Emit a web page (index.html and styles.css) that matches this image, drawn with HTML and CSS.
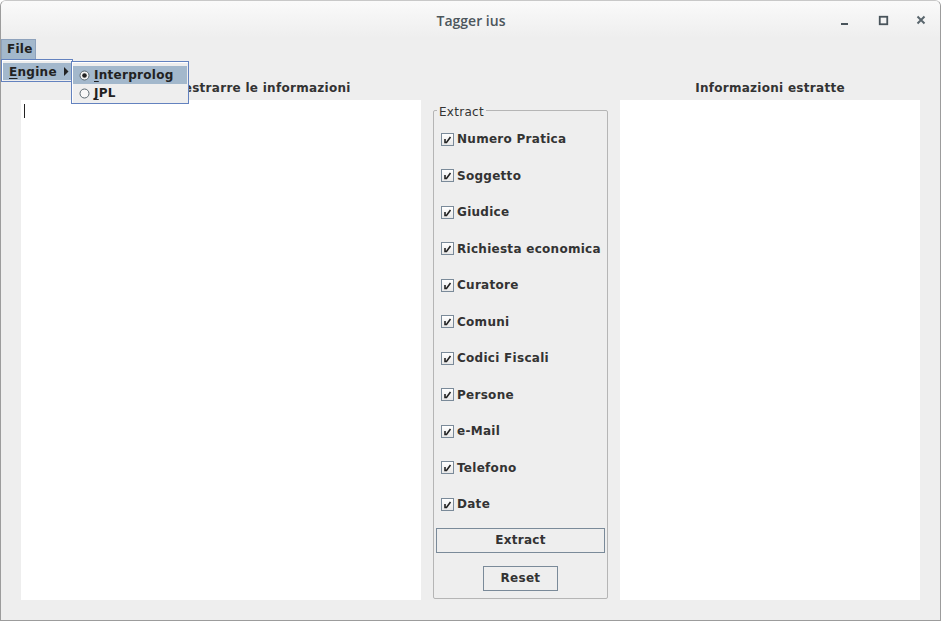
FILE: index.html
```html
<!DOCTYPE html>
<html>
<head>
<meta charset="utf-8">
<title>Tagger ius</title>
<link rel="stylesheet" href="styles.css">
</head>
<body>
<div class="window">
  <div class="titlebar">
    <div class="title">Tagger ius</div>
    <div class="controls">
      <svg class="ctl" width="12" height="12" viewBox="0 0 12 12"><rect x="2" y="9" width="7" height="2" fill="#49545b"/></svg>
      <svg class="ctl" width="12" height="12" viewBox="0 0 12 12"><rect x="2.75" y="2.75" width="7.5" height="7.5" fill="none" stroke="#49545b" stroke-width="1.8"/></svg>
      <svg class="ctl" width="12" height="12" viewBox="0 0 12 12"><path d="M2.5 2.5 L9.5 9.5 M9.5 2.5 L2.5 9.5" stroke="#5a666d" stroke-width="2"/></svg>
    </div>
  </div>
  <div class="menubar">
    <div class="menu-item open">File</div>
  </div>
  <div class="main">
    <div class="col-left">
      <div class="label">Testo da cui estrarre le informazioni</div>
      <div class="textarea"><span class="caret"></span></div>
    </div>
    <div class="col-mid">
      <div class="group">
        <span class="legend">Extract</span>
        <div class="checks">
          <div class="check"><span class="box"><svg width="13" height="13" viewBox="0 0 13 13"><path d="M4 6 L4 9.5 L5.5 9.5 L9.5 4" fill="none" stroke="#222" stroke-width="1.6"/></svg></span>Numero Pratica</div>
          <div class="check"><span class="box"><svg width="13" height="13" viewBox="0 0 13 13"><path d="M4 6 L4 9.5 L5.5 9.5 L9.5 4" fill="none" stroke="#222" stroke-width="1.6"/></svg></span>Soggetto</div>
          <div class="check"><span class="box"><svg width="13" height="13" viewBox="0 0 13 13"><path d="M4 6 L4 9.5 L5.5 9.5 L9.5 4" fill="none" stroke="#222" stroke-width="1.6"/></svg></span>Giudice</div>
          <div class="check"><span class="box"><svg width="13" height="13" viewBox="0 0 13 13"><path d="M4 6 L4 9.5 L5.5 9.5 L9.5 4" fill="none" stroke="#222" stroke-width="1.6"/></svg></span>Richiesta economica</div>
          <div class="check"><span class="box"><svg width="13" height="13" viewBox="0 0 13 13"><path d="M4 6 L4 9.5 L5.5 9.5 L9.5 4" fill="none" stroke="#222" stroke-width="1.6"/></svg></span>Curatore</div>
          <div class="check"><span class="box"><svg width="13" height="13" viewBox="0 0 13 13"><path d="M4 6 L4 9.5 L5.5 9.5 L9.5 4" fill="none" stroke="#222" stroke-width="1.6"/></svg></span>Comuni</div>
          <div class="check"><span class="box"><svg width="13" height="13" viewBox="0 0 13 13"><path d="M4 6 L4 9.5 L5.5 9.5 L9.5 4" fill="none" stroke="#222" stroke-width="1.6"/></svg></span>Codici Fiscali</div>
          <div class="check"><span class="box"><svg width="13" height="13" viewBox="0 0 13 13"><path d="M4 6 L4 9.5 L5.5 9.5 L9.5 4" fill="none" stroke="#222" stroke-width="1.6"/></svg></span>Persone</div>
          <div class="check"><span class="box"><svg width="13" height="13" viewBox="0 0 13 13"><path d="M4 6 L4 9.5 L5.5 9.5 L9.5 4" fill="none" stroke="#222" stroke-width="1.6"/></svg></span>e-Mail</div>
          <div class="check"><span class="box"><svg width="13" height="13" viewBox="0 0 13 13"><path d="M4 6 L4 9.5 L5.5 9.5 L9.5 4" fill="none" stroke="#222" stroke-width="1.6"/></svg></span>Telefono</div>
          <div class="check"><span class="box"><svg width="13" height="13" viewBox="0 0 13 13"><path d="M4 6 L4 9.5 L5.5 9.5 L9.5 4" fill="none" stroke="#222" stroke-width="1.6"/></svg></span>Date</div>
        </div>
        <div class="btn btn-wide">Extract</div>
        <div class="btn btn-small">Reset</div>
      </div>
    </div>
    <div class="col-right">
      <div class="label">Informazioni estratte</div>
      <div class="textarea"></div>
    </div>
  </div>

  <div class="popup popup-file">
    <div class="popup-item sel"><span><u>E</u>ngine</span><svg class="arrow" width="5" height="9" viewBox="0 0 5 9"><path d="M0 0 L4.5 4.5 L0 9 Z" fill="#222"/></svg></div>
  </div>
  <div class="popup popup-engine">
    <div class="popup-item sel"><svg class="radio" width="11" height="11" viewBox="0 0 11 11"><circle cx="5.5" cy="5.5" r="4.5" fill="#f4f4f4" stroke="#5b6870" stroke-width="1"/><circle cx="5.5" cy="5.5" r="2.3" fill="#222"/></svg><span><u>I</u>nterprolog</span></div>
    <div class="popup-item"><svg class="radio" width="11" height="11" viewBox="0 0 11 11"><circle cx="5.5" cy="5.5" r="4.5" fill="#f8f8f8" stroke="#5b6870" stroke-width="1"/></svg><span><u>J</u>PL</span></div>
  </div>
</div>
</body>
</html>
```

FILE: styles.css
```css
* { box-sizing: border-box; }
html, body {
  margin: 0;
  padding: 0;
  background: #ffffff;
}
body {
  width: 941px;
  height: 621px;
  overflow: hidden;
  font-family: "DejaVu Sans", sans-serif;
  font-size: 12px;
  letter-spacing: 0.28px;
  color: #333333;
}
.window {
  position: relative;
  width: 941px;
  height: 621px;
  background: #eeeeee;
  border: 1px solid #9c9c9c;
  border-top-color: #c8c8c8;
  border-radius: 6px 6px 0 0;
  overflow: hidden;
}
.titlebar {
  height: 37px;
  background: linear-gradient(#fafafa, #eeeeee);
  display: flex;
  align-items: center;
  justify-content: center;
  position: relative;
}
.title {
  font-family: "Open Sans", "Noto Sans", sans-serif;
  font-weight: 600;
  font-size: 14px;
  letter-spacing: 0;
  color: #4c565c;
  margin-top: 1px;
  margin-left: 1px;
}
.controls {
  position: absolute;
  right: 13px;
  top: 13px;
  display: flex;
  gap: 26px;
}
.ctl { display: block; }

.menubar {
  height: 21px;
  padding-top: 1px;
  display: flex;
}
.menu-item {
  font-weight: bold;
  padding: 0 5px 0 5px;
  height: 20px;
  line-height: 18px;
  color: #222;
}
.menu-item.open {
  background: #a3b8cc;
  border: 1px solid #8ea2bc;
  border-bottom: none;
  width: 35px;
}

.main {
  display: flex;
  padding: 21px 0 0 20px;
}
.label {
  font-weight: bold;
  text-align: center;
  height: 20px;
  line-height: 17px;
  color: #333;
}
.textarea {
  background: #ffffff;
  height: 500px;
  position: relative;
}
.col-left { width: 400px; }
.col-left .label { padding-left: 4px; }
.col-left .textarea { padding: 4px 0 0 3px; }
.caret {
  display: block;
  width: 1px;
  height: 14px;
  background: #222;
}
.col-mid {
  width: 175px;
  margin-left: 12px;
  padding-top: 30px;
}
.col-right {
  width: 300px;
  margin-left: 12px;
}

.group {
  position: relative;
  height: 489px;
  border: 1px solid #b5b5b5;
  border-radius: 2px;
  padding: 10px 1px 0 1px;
}
.legend {
  position: absolute;
  top: -6px;
  left: 3px;
  padding: 0 2px 0 2px;
  background: #eeeeee;
  font-weight: normal;
  font-size: 12px;
  line-height: 14px;
  color: #333;
}
.checks {
  display: flex;
  flex-direction: column;
  padding-left: 6px;
}
.check {
  display: flex;
  align-items: center;
  height: 36.5px;
  font-weight: bold;
  color: #333;
  white-space: nowrap;
}
.box {
  width: 13px;
  height: 13px;
  border: 1px solid #7a8a99;
  background: linear-gradient(#ffffff, #e8e8e8);
  margin-right: 3px;
  position: relative;
}
.box svg {
  position: absolute;
  left: -1px;
  top: -1px;
}
.btn {
  height: 25px;
  border: 1px solid #7a8a99;
  background: #eeeeee;
  font-weight: bold;
  color: #333;
  display: flex;
  align-items: center;
  justify-content: center;
}
.btn-wide {
  margin: 5px 1px 0 1px;
}
.btn-small {
  width: 75px;
  margin: 13px auto 0 auto;
}

.popup {
  position: absolute;
  background: #eeeeee;
  border: 1px solid #6382bf;
  box-shadow: inset 1px 1px 0 #ffffff;
}
.popup-file {
  left: 0px;
  top: 58px;
  width: 72px;
  height: 23px;
  padding: 3px 1px 1px 1px;
}
.popup-engine {
  left: 70px;
  top: 60px;
  width: 118px;
  height: 43px;
  padding: 4px 1px 1px 1px;
}
.popup-item {
  height: 18px;
  display: flex;
  align-items: center;
  font-weight: bold;
  color: #222;
  white-space: nowrap;
}
.popup-file .popup-item {
  padding-left: 6px;
  height: 17px;
}
.popup-item.sel { background: #a3b8cc; }
.popup-item u { text-decoration: underline; text-underline-offset: 2px; }
.arrow { margin-left: 7px; }
.popup-engine .popup-item { padding-left: 6px; }
.radio { margin-right: 4px; }
```
